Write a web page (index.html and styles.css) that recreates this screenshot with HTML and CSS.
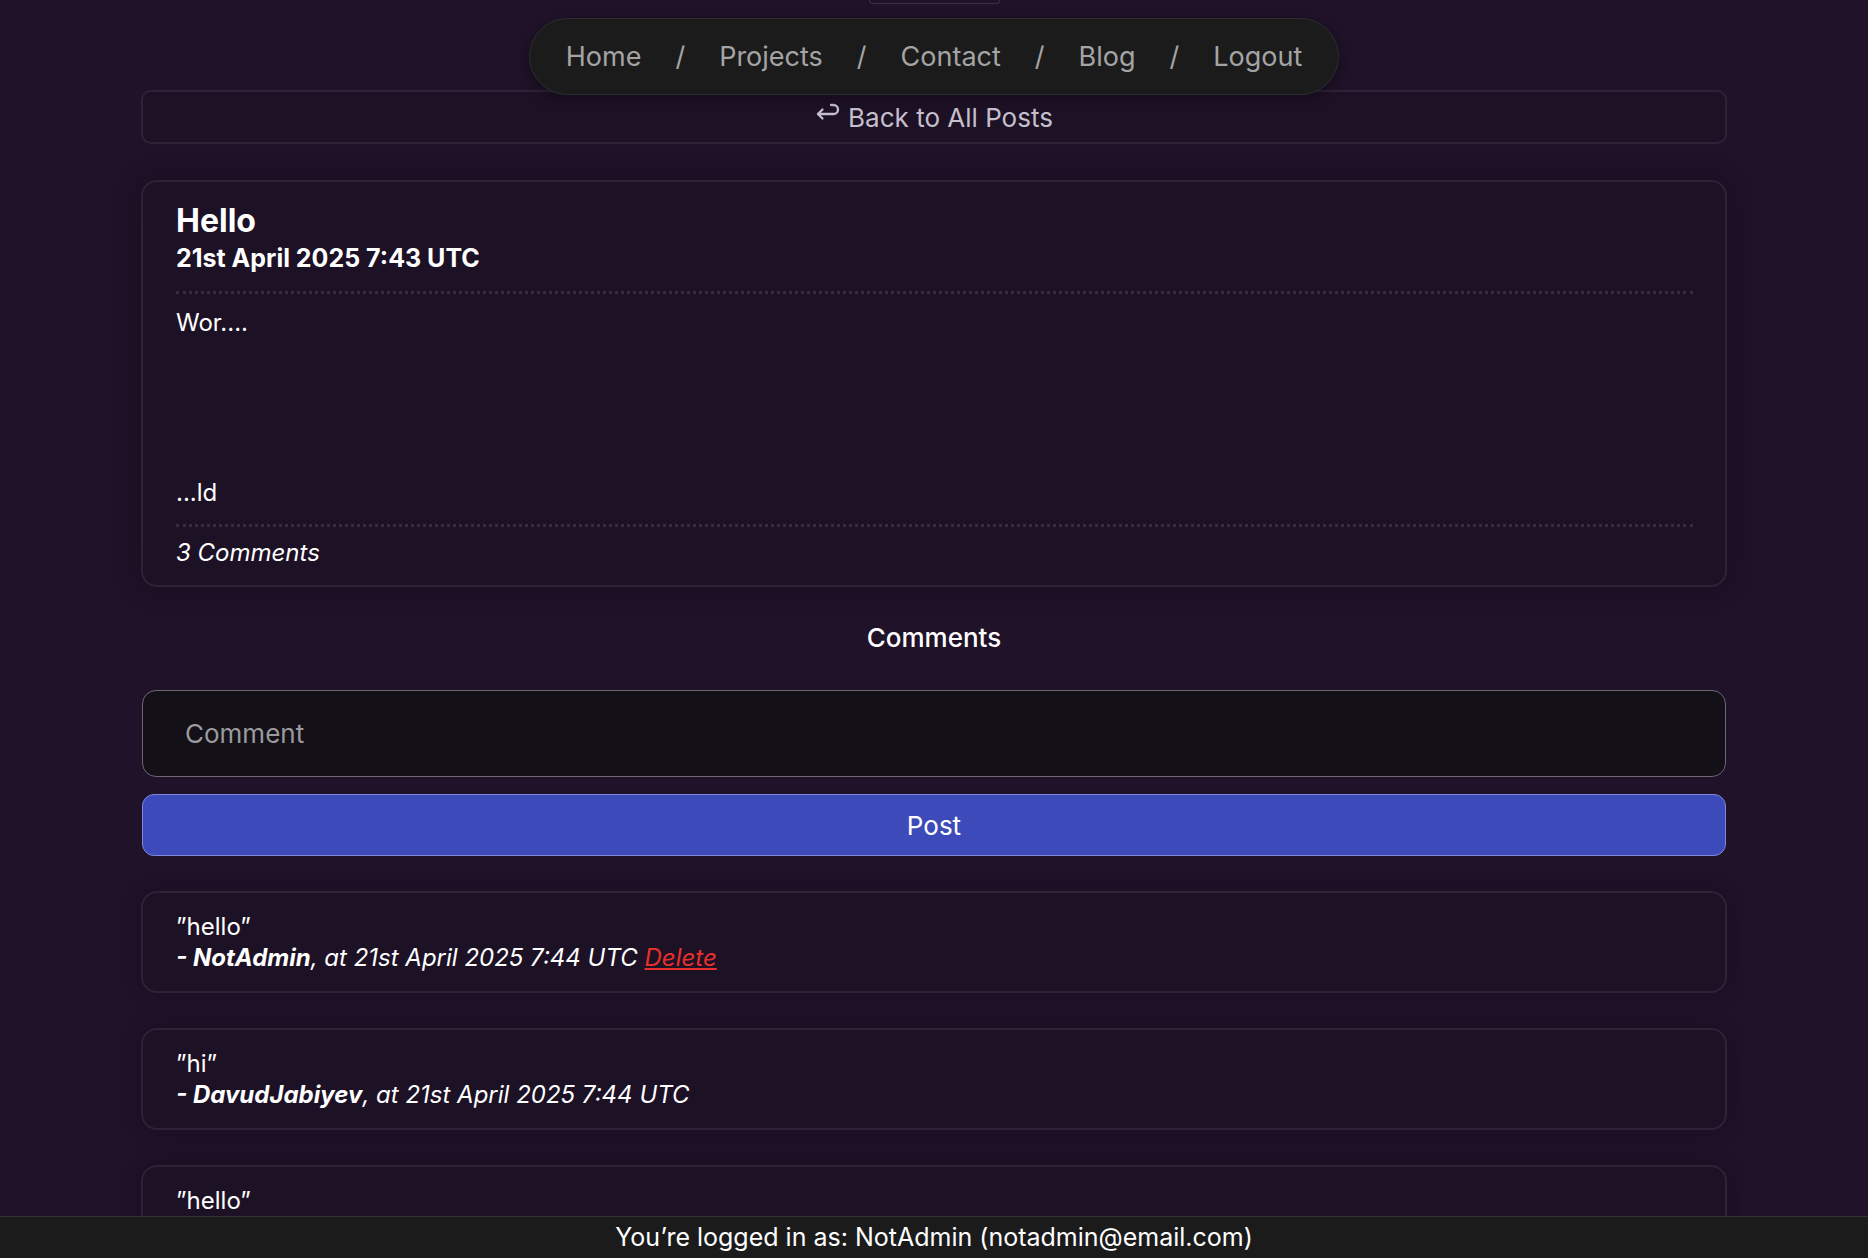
FILE: index.html
```html
<!DOCTYPE html>
<html lang="en">
<head>
    <meta charset="UTF-8">
    <meta name="viewport" content="width=device-width, initial-scale=1.0">
    <title>Hello - Blog</title>
    <link rel="stylesheet" href="styles.css">
</head>
<body>
    <div class="page">
        <div class="top-tab"></div>

        <nav class="nav">
            <a href="#">Home</a>
            <span class="sep">/</span>
            <a href="#">Projects</a>
            <span class="sep">/</span>
            <a href="#">Contact</a>
            <span class="sep">/</span>
            <a href="#">Blog</a>
            <span class="sep">/</span>
            <a href="#">Logout</a>
        </nav>

        <a class="back" href="#">
            <svg class="back-icon" width="25" height="23" viewBox="0 0 25 23" fill="none" stroke="currentColor" stroke-width="2.3" stroke-linecap="round" stroke-linejoin="round">
                <path d="M16 3h2.5a4.5 4.5 0 0 1 0 9H3"/>
                <path d="M7.5 7.5L3 12l4.5 4.5"/>
            </svg>
            Back to All Posts
        </a>

        <article class="post">
            <h1 class="post-title">Hello</h1>
            <div class="post-date">21st April 2025 7:43 UTC</div>
            <hr class="dots">
            <div class="post-body">Wor....




...ld</div>
            <hr class="dots dots-end">
            <div class="post-count">3 Comments</div>
        </article>

        <h2 class="comments-title">Comments</h2>

        <form class="comment-form">
            <input type="text" class="comment-input" placeholder="Comment">
            <button type="button" class="post-btn">Post</button>
        </form>

        <div class="comment">
            <div class="comment-text">”hello”</div>
            <div class="comment-meta"><b>- NotAdmin</b>, at 21st April 2025 7:44 UTC <a href="#" class="delete">Delete</a></div>
        </div>

        <div class="comment">
            <div class="comment-text">”hi”</div>
            <div class="comment-meta"><b>- DavudJabiyev</b>, at 21st April 2025 7:44 UTC</div>
        </div>

        <div class="comment">
            <div class="comment-text">”hello”</div>
            <div class="comment-meta"><b>- DavudJabiyev</b>, at 21st April 2025 7:44 UTC</div>
        </div>
    </div>

    <footer class="footer">You’re logged in as: NotAdmin (notadmin@email.com)</footer>
</body>
</html>
```

FILE: styles.css
```css
body {
    font-family: Inter, "Noto Sans", sans-serif;
    margin: 0;
    padding: 0;
    background: #1f1229;
    color: #fff;
}
a {
    color: inherit;
    text-decoration: none;
}
.page {
    width: 1586px;
    margin: 0 auto;
    padding-bottom: 80px;
}
.top-tab {
    width: 129px;
    height: 3px;
    margin: 0 auto;
    border: 1px solid #3a3040;
    border-top: none;
    border-radius: 0 0 4px 4px;
}
.nav {
    position: relative;
    z-index: 2;
    display: flex;
    align-items: center;
    width: max-content;
    height: 75px;
    margin: 14px auto 0;
    padding: 0 36px;
    background: #1b1b1b;
    border: 1px solid #2e2e2e;
    border-radius: 40px;
    box-shadow: 0 4px 14px rgba(0, 0, 0, 0.35);
    font-size: 27px;
    color: #a4a4a4;
}
.nav .sep {
    margin: 0 34px;
}
.back {
    display: flex;
    align-items: center;
    justify-content: center;
    gap: 8px;
    height: 50px;
    margin-top: -5px;
    border: 2px solid #2d2336;
    border-radius: 10px;
    background: #1d1126;
    font-size: 26px;
    color: #c6bfcc;
}
.back-icon {
    margin-top: -8px;
}
.post {
    margin-top: 36px;
    padding: 20px 32px 15px 33px;
    border: 2px solid #2d2336;
    border-radius: 16px;
    background: #1d1126;
    box-shadow: 0 0 30px rgba(0, 0, 0, 0.28);
}
.post-title {
    margin: 0;
    font-size: 32px;
    line-height: 38px;
    font-weight: 700;
}
.post-date {
    font-size: 25px;
    line-height: 36px;
    font-weight: 700;
}
.dots {
    margin: 15px 0 12px;
    height: 0;
    border: none;
    border-top: 3px dotted #372c42;
}
.dots-end {
    margin: 14px 0 9px;
}
.post-body {
    font-size: 24px;
    line-height: 34px;
    white-space: pre-wrap;
}
.post-count {
    font-size: 24px;
    line-height: 34px;
    font-style: italic;
}
.comments-title {
    margin: 34px 0 35px;
    text-align: center;
    font-size: 26px;
    line-height: 34px;
    font-weight: 500;
}
.comment-form {
    margin: 0 1px;
}
.comment-input {
    display: block;
    box-sizing: border-box;
    width: 100%;
    height: 87px;
    padding: 0 42px;
    border: 1px solid #6d6870;
    border-radius: 14px;
    background: #131117;
    color: #fff;
    font-family: inherit;
    font-size: 26px;
}
.comment-input::placeholder {
    color: #9c9a9e;
}
.post-btn {
    display: block;
    box-sizing: border-box;
    width: 100%;
    height: 62px;
    margin-top: 17px;
    border: 1px solid #8088dc;
    border-radius: 12px;
    background: #3c4aba;
    color: #fff;
    font-family: inherit;
    font-size: 26px;
    cursor: pointer;
}
.comment {
    margin-top: 35px;
    padding: 18px 33px 18px;
    border: 2px solid #2d2336;
    border-radius: 16px;
    background: #1d1126;
    box-shadow: 0 0 24px rgba(0, 0, 0, 0.2);
    font-size: 24px;
    line-height: 31px;
}
.comment-meta {
    font-style: italic;
}
.delete {
    color: #e8302a;
    text-decoration: underline;
}
.footer {
    position: fixed;
    z-index: 3;
    left: 0;
    right: 0;
    bottom: 0;
    height: 41px;
    border-top: 1px solid #343434;
    background: #1b1b1b;
    text-align: center;
    font-size: 25px;
    line-height: 41px;
    color: #fff;
}
```
